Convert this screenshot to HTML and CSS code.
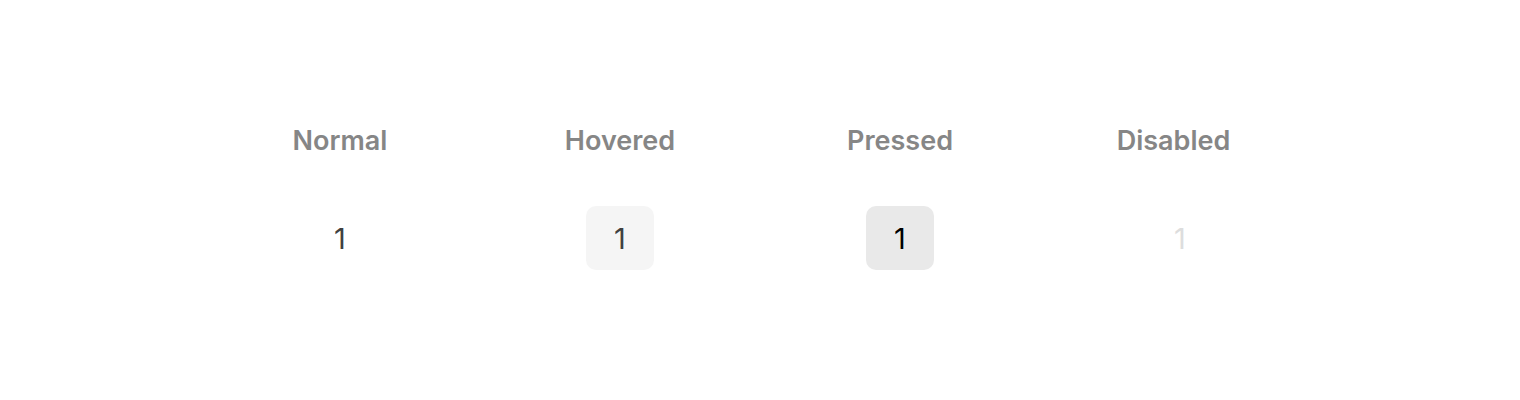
FILE: index.html
```html
<!DOCTYPE html>
<html lang="en">
  <head>
    <meta charset="UTF-8" />
    <meta name="viewport" content="width=device-width, initial-scale=1.0" />
    <title>Pagination item states</title>
    <link rel="stylesheet" href="styles.css">
  </head>
  <body>
    <div class="states">
      <div class="state">
        <span class="state-label">Normal</span>
        <button class="page-item">1</button>
      </div>
      <div class="state">
        <span class="state-label">Hovered</span>
        <button class="page-item hovered">1</button>
      </div>
      <div class="state">
        <span class="state-label">Pressed</span>
        <button class="page-item pressed">1</button>
      </div>
      <div class="state">
        <span class="state-label state-label-disabled">Disabled</span>
        <button class="page-item" disabled>1</button>
      </div>
    </div>
  </body>
</html>
```

FILE: styles.css
```css
body {
  margin: 0;
  background-color: #fff;
  font-family: Inter, "Liberation Sans", sans-serif;
}
.states {
  display: grid;
  grid-template-columns: repeat(4, 280px);
  justify-content: center;
  padding-top: 125px;
}
.state {
  display: flex;
  flex-direction: column;
  align-items: center;
  gap: 49px;
}
.state-label {
  font-size: 27px;
  line-height: 32px;
  font-weight: 600;
  color: #868686;
}
.state-label-disabled {
  margin-right: 13px;
}
.page-item {
  width: 68px;
  height: 64px;
  border: none;
  border-radius: 10px;
  background-color: transparent;
  font-family: inherit;
  font-size: 29px;
  font-weight: 400;
  color: #404040;
  padding: 0;
}
.page-item.hovered {
  background-color: #f5f5f5;
}
.page-item.pressed {
  background-color: #e9e9e9;
  color: #000;
}
.page-item:disabled {
  color: #ddd;
}
```
